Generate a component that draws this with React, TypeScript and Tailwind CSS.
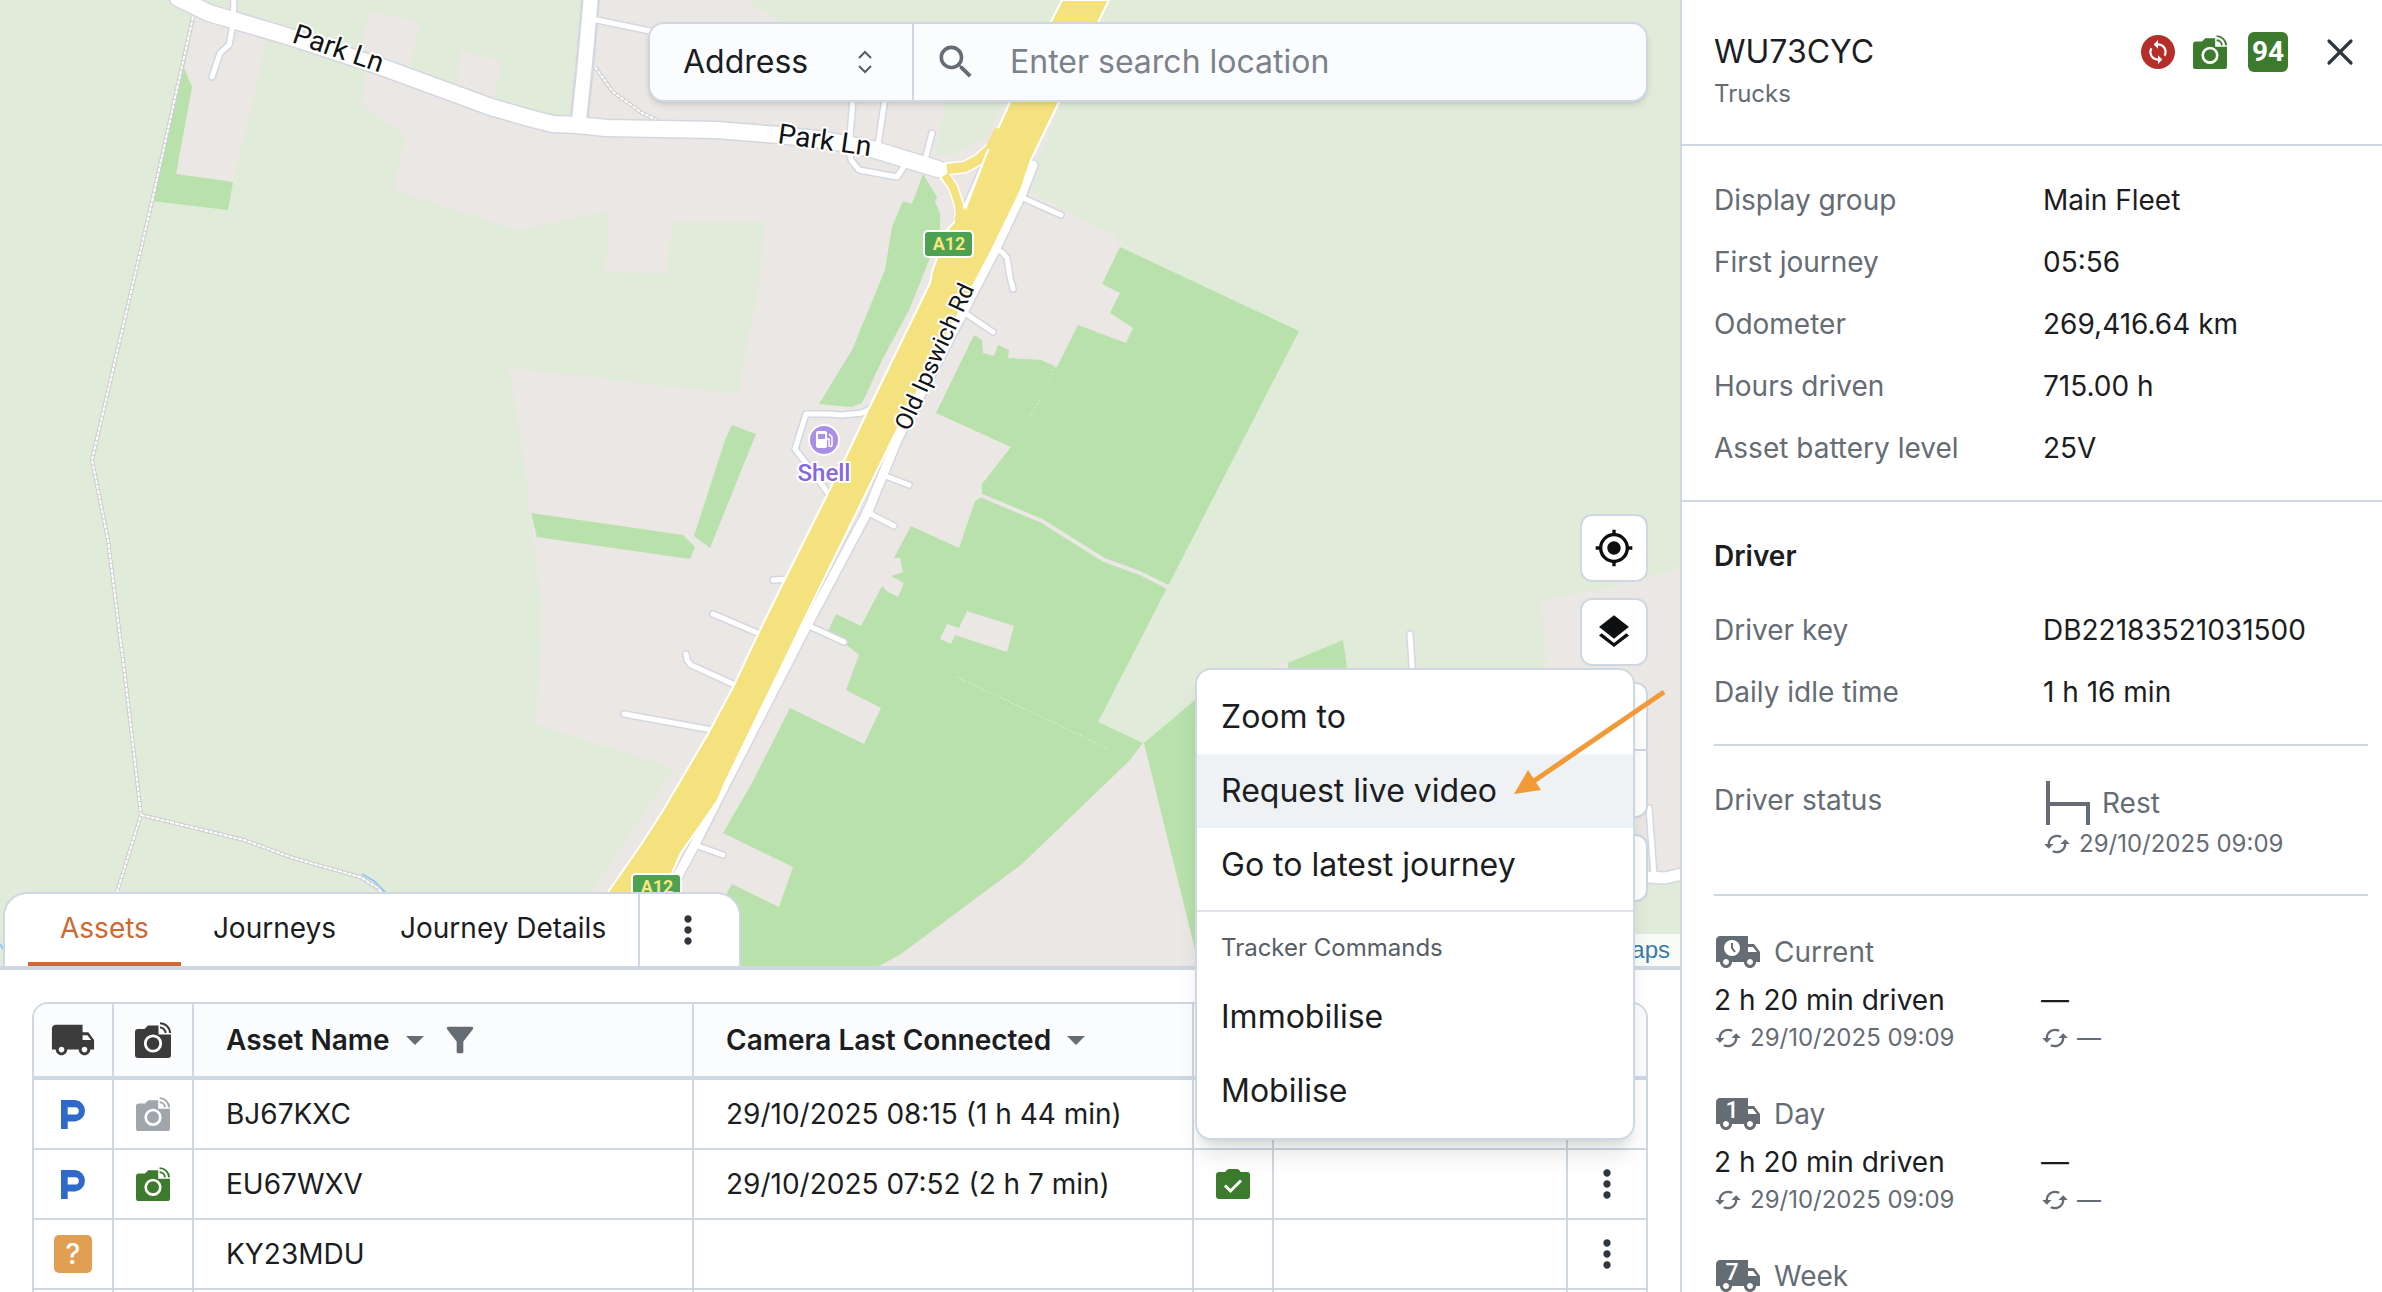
import type { ReactNode } from 'react';
import {
  MdCached,
  MdFilterAlt,
  MdLayers,
  MdLocalShipping,
  MdMoreVert,
  MdMyLocation,
  MdSearch,
  MdSync,
} from 'react-icons/md';
import { X } from 'lucide-react';

function CameraIcon({ className }: { className: string }) {
  return (
    <svg viewBox="0 0 36 36" className={className} aria-hidden="true">
      <path
        fill="currentColor"
        d="M3 7h6.500L13 3.400h10.500V12.500H36V33a3 3 0 0 1-3 3H3a3 3 0 0 1-3-3V10a3 3 0 0 1 3-3z"
      />
      <circle cx="18" cy="21.500" r="7.700" fill="none" stroke="#fff" strokeWidth="2.800" />
      <g fill="none" stroke="currentColor" strokeWidth="2">
        <path d="M25 1.200A10 10 0 0 1 35 11" />
        <path d="M25 5.600A5.600 5.600 0 0 1 30.600 11" />
      </g>
    </svg>
  );
}

function ParkedIcon() {
  return (
    <svg viewBox="0 0 25 29" className="mx-auto h-[29px] w-[25px]" role="img" aria-label="Parked">
      <path
        fill="#2f69c9"
        fillRule="evenodd"
        d="M0 0h14.200a10.800 10.800 0 0 1 0 21.500H6.700V29H0zM6.700 7.200v7.400h7.400a3.700 3.700 0 0 0 0-7.400z"
      />
    </svg>
  );
}

function CheckedIcon() {
  return (
    <svg viewBox="0 0 34 30" className="mx-auto h-[30px] w-[34px]" role="img" aria-label="Checks passed">
      <path
        fill="#3c7a2e"
        d="M3 3h6.500c.6-1.800 2-3 4-3h7c2 0 3.400 1.200 4 3H31a3 3 0 0 1 3 3v21a3 3 0 0 1-3 3H3a3 3 0 0 1-3-3V6a3 3 0 0 1 3-3z"
      />
      <path d="m9 16.500 5.500 5.500L25 11.500" fill="none" stroke="#fff" strokeWidth="3" />
    </svg>
  );
}

function SortIcon() {
  return (
    <svg viewBox="0 0 18 9" className="h-[9px] w-[18px]" aria-hidden="true">
      <path fill="#656c74" d="M0 0h18l-9 9z" />
    </svg>
  );
}

const residential =
  'M370 11 421 22 410 67 455 95 461 50 502 61 494 100 553 124 579 120 597 0 745 0 783 22 950 60 945 102 935 157 958 153 985 137 1005 103 1040 30 1080 30 1062 102 1038 160 1028 190 1114 235 1120 247 1299 331 1168 585 1098 722 1144 743 1195 944 1200 966 570 966 591 892 673 768 534 724 539 687 542 620 542 607 521 440 509 368 738 394 759 283 765 221 672 221 667 274 605 272 610 211 518 230 394 190 405 135 362 106 366 67 362 43Z';

const woods = [
  'M195 19 184 68 192 87 176 174 233 182 228 210 152 201Z',
  'M923 174 937 197 935 202 940 213 940 230 930 258 909 310 882 360 862 403 851 407 819 404 852 350 885 270 892 227 903 201 912 204Z',
  'M732 425 756 434 710 548 694 536 725 440Z',
  'M531 513 683 535 695 547 690 559 537 537Z',
  'M1120 247 1102 284 1120 293 1110 313 1133 328 1126 343 1078 325 1057 367 1041 360 1008 358 1009 350 998 345 994 356 983 353 982 340 974 335 936 413 1011 447 982 484 982 497 975 501 959 548 911 526 894 558 900 558 903 572 891 576 904 583 898 597 888 592 882 586 861 626 836 614 828 631 848 646 859 655 846 690 881 708 864 744 790 708 752 783 723 833 793 867 779 907 732 884 727 893 715 966 879 966 901 954 1022 864 1129 761 1143 743 1098 722 1168 586 1299 331Z',
  'M1144 743 1195 700 1240 670 1240 966 1199 966Z',
  'M1288 663 1343 640 1348 675 1288 675Z',
];

const lanes = [
  'M591 -5 585 63 579 120',
  'M178 -2 209 13 287 36 379 66 491 107 529 118 553 124 577 125 606 128 716 130 779 135 825 140 872 149 938 169',
];

const tracks = [
  'M597 20 650 31 700 45',
  'M853 98 849 150 851 160 859 170 897 177 905 165',
  'M885 98 878 145',
  'M932 133 925 160',
  'M234 -3 233 25 229 45 220 53 212 77',
  'M986 160 966 206',
  'M1021 197 1061 215',
  'M994 249 1002 252 1007 258 1010 277 1013 289',
  'M965 313 993 332',
  'M883 475 909 485',
  'M865 511 894 526',
  'M807 625 844 642',
  'M695 845 723 855',
  'M795 579 773 580',
  'M760 634 713 614',
  'M735 685 691 665 687 660 686 654',
  'M712 730 624 714',
  'M872 408 862 413 842 415 829 414 806 414 795 449 809 467 825 489 832 500',
  'M1410 634 1413 680',
  'M1649 808 1654 876',
];

const paths = [
  'M193 17 153 197 92 460 108 540 127 693 141 815 117 892 105 966',
  'M141 815 244 840 293 858 360 877 378 888 390 905',
  'M595 67 613 92 642 113 659 121',
];

const serviceRoad = 'M1033 165 1022 193 994 252 897 440 868 511 805 629 727 781 694 846 670 890';

const trunkRoad =
  'M1062 0 1010 102 986 155 965 210 947 230 932 272 930 283 869 408 841 467 785 579 758 634 734 685 709 732 662 812 640 846 608 892 565 966 640 966 672 873 681 853 718 800 725 783 805 618 892 440 898 428 992 250 1021 190 1031 160 1059 102 1109 0Z';

function RoadBadge({ x, y }: { x: number; y: number }) {
  return (
    <g>
      <rect x={x} y={y} width="49" height="26" rx="4" fill="#4ca153" stroke="#fff" strokeWidth="2" />
      <text
        x={x + 25}
        y={y + 19}
        textAnchor="middle"
        className="fill-[#f6e77c] font-['Roboto'] text-[18px] font-bold"
      >
        A12
      </text>
    </g>
  );
}

function MapCanvas() {
  return (
    <svg
      viewBox="0 0 1680 966"
      preserveAspectRatio="xMidYMid slice"
      className="absolute inset-0 h-full w-full"
      role="img"
      aria-label="Map of the area around Old Ipswich Road"
    >
      <rect width="1680" height="966" fill="#e0ecd9" />
      <g fill="#ebe7e4">
        <path d={residential} />
        <path d="M193 15 233 27 266 40 255 93 233 182 176 174 192 87 184 68Z" />
        <path d="M1541 600 1613 587 1680 568V868L1648 880H1565Z" />
        <path d="M1270 668 1288 662V680H1270Z" />
      </g>
      <g fill="#b8e1ab">
        {woods.map((d) => (
          <path key={d} d={d} />
        ))}
      </g>
      <path fill="#ebe7e4" d="M967 611 1014 626 1007 652 955 635 951 644 940 639 947 624 959 628Z" />
      <g fill="none" stroke="#ebe7e4">
        <path strokeWidth="4" d="M980 495 1042 521 1104 560 1140 573 1168 587" />
        <path strokeWidth="1" strokeDasharray="2 2" d="M957 677 1048 720 1107 748" />
        <path strokeWidth="1" strokeDasharray="2 2" d="M1056 366 1047 383M1040 400 1029 418" />
      </g>
      <path d="M362 874 374 881 386 893" fill="none" stroke="#8fcbf5" strokeWidth="2" />
      <path d="M0 944 4 950" fill="none" stroke="#8fcbf5" strokeWidth="2" />

      <g fill="none" strokeLinejoin="round">
        {paths.map((d) => (
          <g key={d}>
            <path d={d} stroke="#cccdd0" strokeWidth="4" />
            <path d={d} stroke="#fff" strokeWidth="2" strokeDasharray="4 1" />
          </g>
        ))}
      </g>

      <g fill="none" strokeLinecap="round" strokeLinejoin="round">
        <g stroke="#d5d7e0">
          {tracks.map((d) => (
            <path key={d} d={d} strokeWidth="8" />
          ))}
          {lanes.map((d) => (
            <path key={d} d={d} strokeWidth="19" />
          ))}
          <path d={serviceRoad} strokeWidth="12" />
          <path d="M1648 877 1665 878 1690 872" strokeWidth="14" />
        </g>
        <g stroke="#fff">
          {tracks.map((d) => (
            <path key={d} d={d} strokeWidth="5" />
          ))}
          <path d={lanes[0]} strokeWidth="14" />
          <path d={lanes[1]} strokeWidth="16" />
          <path d={serviceRoad} strokeWidth="9" />
          <path d="M1648 877 1665 878 1690 872" strokeWidth="11" />
          <path d="M945 169 965 167 978 160 995 145" strokeWidth="13" />
          <path d="M944 175 953 187 959 205 960 220" strokeWidth="11" />
        </g>
        <g stroke="#f4e27f">
          <path d="M947 169 965 167 978 160 995 145" strokeWidth="10" strokeLinecap="butt" />
          <path d="M945 175 953 187 959 205 960 220" strokeWidth="8" strokeLinecap="butt" />
        </g>
      </g>
      <path d={trunkRoad} fill="#f4e27f" stroke="#fff" strokeWidth="2" />
      <path d="M985 148 995 128 1010 130 1000 152ZM955 216 966 208 968 225 955 228Z" fill="#f4e27f" />

      <RoadBadge x={924} y={231} />
      <RoadBadge x={632} y={874} />

      <circle cx="824" cy="440" r="15" fill="#a98fe6" stroke="#fff" strokeWidth="2" />
      <g transform="translate(816 431)">
        <rect width="11" height="17" rx="2" fill="#fff" />
        <rect x="2" y="3" width="7" height="5" fill="#a98fe6" />
        <path d="M11 8h2v6a1.500 1.500 0 0 0 3 0V6l-3-3" fill="none" stroke="#fff" strokeWidth="1.500" />
      </g>

      <g stroke="#fff" strokeWidth="4" strokeLinejoin="round" paintOrder="stroke">
        <text
          x="824"
          y="481"
          textAnchor="middle"
          className="fill-[#8468dc] font-['Roboto'] text-[24px] font-medium"
        >
          Shell
        </text>
        <g className="fill-[#111315] font-['Roboto']">
          <text transform="translate(291 42) rotate(19)" className="text-[28px]">
            Park Ln
          </text>
          <text transform="translate(777 143) rotate(8)" className="text-[28px]">
            Park Ln
          </text>
          <text transform="translate(909 432) rotate(-65.500)" className="text-[24px]">
            Old Ipswich Rd
          </text>
        </g>
      </g>
    </svg>
  );
}

function SearchBar() {
  return (
    <div className="absolute top-[22px] right-8 flex h-20 w-[1000px] max-w-[90%] overflow-hidden rounded-2xl border-2 border-[#cfd8e2] bg-[#fbfcfe] text-[32px] shadow-md">
      <div className="relative w-[264px] shrink-0 border-r-2 border-[#cfd8e2]">
        <select
          aria-label="Search type"
          className="h-full w-full appearance-none bg-transparent pl-[33px] text-[#1b1d1f] outline-none"
        >
          <option>Address</option>
        </select>
        <svg
          viewBox="0 0 14 24"
          className="pointer-events-none absolute top-1/2 right-10 h-6 w-[14px] -translate-y-1/2"
          fill="none"
          stroke="#565d65"
          strokeWidth="2"
          aria-hidden="true"
        >
          <path d="m1 8 6-6 6 6M1 16l6 6 6-6" />
        </svg>
      </div>
      <label className="flex min-w-0 flex-1 items-center gap-8 pl-5">
        <MdSearch className="size-11 shrink-0 text-[#656c74]" aria-hidden="true" />
        <input
          type="text"
          aria-label="Search location"
          placeholder="Enter search location"
          className="min-w-0 flex-1 bg-transparent text-[#1b1d1f] outline-none placeholder:text-[#7b828b]"
        />
      </label>
    </div>
  );
}

function MapButton({ label, children }: { label: string; children?: ReactNode }) {
  return (
    <button
      type="button"
      aria-label={label}
      className="flex size-[68px] items-center justify-center rounded-xl border-2 border-[#cfd8e2] bg-white text-[#0d0f11]"
    >
      {children}
    </button>
  );
}

function MapControls() {
  return (
    <div className="absolute right-8 bottom-16 flex flex-col gap-4">
      <MapButton label="Centre on my location">
        <MdMyLocation className="size-10" />
      </MapButton>
      <MapButton label="Map layers">
        <MdLayers className="size-10" />
      </MapButton>
      <div className="flex h-[136px] w-[68px] flex-col divide-y-2 divide-[#cfd8e2] rounded-xl border-2 border-[#cfd8e2] bg-white">
        <button type="button" aria-label="Zoom in" className="flex-1" />
        <button type="button" aria-label="Zoom out" className="flex-1" />
      </div>
      <MapButton label="Map tools" />
    </div>
  );
}

function Tabs() {
  return (
    <div className="absolute bottom-0 left-[3px] flex h-[74px] rounded-t-3xl border-2 border-b-0 border-[#cfd8e2] bg-white text-[28px] text-[#1b1d1f]">
      <div role="tablist" className="flex pl-[23px]">
        <button
          type="button"
          role="tab"
          aria-selected="true"
          className="border-b-4 border-[#cf6832] px-8 text-[#cf6832]"
        >
          Assets
        </button>
        <button type="button" role="tab" aria-selected="false" className="border-b-4 border-transparent px-8">
          Journeys
        </button>
        <button type="button" role="tab" aria-selected="false" className="border-b-4 border-transparent px-8">
          Journey Details
        </button>
      </div>
      <button
        type="button"
        aria-label="More tabs"
        className="flex w-[101px] items-center justify-center border-l-2 border-[#cfd8e2] pr-1 text-[#2f363d]"
      >
        <MdMoreVert className="size-11" />
      </button>
    </div>
  );
}

const headCell = 'h-[76px] border-r-2 border-b-4 border-[#cfd8e2] last:border-r-0';
const bodyCell = 'h-[70px] border-r-2 border-b-2 border-[#cfd8e2] last:border-r-0';

type Row = {
  name: string;
  status: 'parked' | 'unknown';
  camera?: 'online' | 'offline';
  connected: string;
  checked?: boolean;
};

const rows: Row[] = [
  { name: 'BJ67KXC', status: 'parked', camera: 'offline', connected: '29/10/2025 08:15 (1 h 44 min)' },
  {
    name: 'EU67WXV',
    status: 'parked',
    camera: 'online',
    connected: '29/10/2025 07:52 (2 h 7 min)',
    checked: true,
  },
  { name: 'KY23MDU', status: 'unknown', connected: '' },
  { name: '', status: 'parked', connected: '' },
];

function AssetTable() {
  return (
    <div className="overflow-hidden rounded-t-2xl border-2 border-[#cfd8e2]">
      <table className="w-full table-fixed border-separate border-spacing-0 text-left text-[28px] text-[#1b1d1f]">
        <colgroup>
          <col className="w-20" />
          <col className="w-20" />
          <col className="w-[500px]" />
          <col className="w-[500px]" />
          <col className="w-20" />
          <col />
          <col className="w-[78px]" />
        </colgroup>
        <thead className="bg-[#fbfcfe]">
          <tr>
            <th className={headCell} aria-label="Status">
              <MdLocalShipping className="mx-auto size-[46px] text-[#3b3b3b]" />
            </th>
            <th className={headCell} aria-label="Camera">
              <CameraIcon className="mx-auto size-9 text-[#3b3b3b]" />
            </th>
            <th className={headCell}>
              <div className="flex items-center gap-4 pl-8 font-semibold">
                Asset Name
                <SortIcon />
                <button type="button" aria-label="Filter by asset name">
                  <MdFilterAlt className="size-10 text-[#656c74]" />
                </button>
              </div>
            </th>
            <th className={headCell}>
              <div className="flex items-center gap-4 pl-8 font-semibold">
                Camera Last Connected
                <SortIcon />
              </div>
            </th>
            <th className={headCell} aria-label="Checks" />
            <th className={headCell} aria-label="Notes" />
            <th className={headCell} aria-label="Actions" />
          </tr>
        </thead>
        <tbody>
          {rows.map((row) => (
            <tr key={row.name}>
              <td className={bodyCell}>
                {row.status === 'parked' ? (
                  <ParkedIcon />
                ) : (
                  <span className="mx-auto flex size-[38px] items-center justify-center rounded-[5px] bg-[#e09f52] font-medium text-white">
                    ?
                  </span>
                )}
              </td>
              <td className={bodyCell}>
                {row.camera === 'online' && <CameraIcon className="mx-auto size-[34px] text-[#3c7a2e]" />}
                {row.camera === 'offline' && <CameraIcon className="mx-auto size-[34px] text-[#a1a6ad]" />}
              </td>
              <td className={bodyCell}>
                <div className="pl-8">{row.name}</div>
              </td>
              <td className={bodyCell}>
                <div className="pl-8">{row.connected}</div>
              </td>
              <td className={bodyCell}>{row.checked && <CheckedIcon />}</td>
              <td className={bodyCell} />
              <td className={bodyCell}>
                {row.name && (
                  <button
                    type="button"
                    aria-label={`Actions for ${row.name}`}
                    className="mx-auto block text-[#2f363d]"
                  >
                    <MdMoreVert className="size-11" />
                  </button>
                )}
              </td>
            </tr>
          ))}
        </tbody>
      </table>
    </div>
  );
}

function MenuItem({ children, active = false }: { children: ReactNode; active?: boolean }) {
  return (
    <button
      type="button"
      role="menuitem"
      className={
        active
          ? 'block h-[74px] w-full bg-[#eef2f5] px-6 text-left'
          : 'block h-[74px] w-full px-6 text-left'
      }
    >
      {children}
    </button>
  );
}

function ContextMenu() {
  return (
    <div
      role="menu"
      className="absolute right-[45px] bottom-[152px] w-[440px] overflow-hidden rounded-2xl border-2 border-[#cfd8e2] bg-white py-[10px] text-[32px] text-[#1b1d1f] shadow-xl"
    >
      <MenuItem>Zoom to</MenuItem>
      <MenuItem active>Request live video</MenuItem>
      <MenuItem>Go to latest journey</MenuItem>
      <div className="mt-2 flex h-[70px] items-center border-t-2 border-[#dde3e9] px-6 pt-1 text-[24px] text-[#565d65]">
        Tracker Commands
      </div>
      <MenuItem>Immobilise</MenuItem>
      <MenuItem>Mobilise</MenuItem>
    </div>
  );
}

function Pointer() {
  return (
    <svg
      viewBox="0 0 154 110"
      className="pointer-events-none absolute right-[13px] bottom-[495px] h-[110px] w-[154px]"
      aria-hidden="true"
    >
      <path d="M151 5 18 96" stroke="#f09a38" strokeWidth="5" />
      <path d="M1 107 15 83 28 103Z" fill="#f09a38" />
    </svg>
  );
}

function Detail({ label, value }: { label: string; value: string }) {
  return (
    <div className="flex h-[62px] items-center">
      <dt className="w-[329px] shrink-0 text-[#656c74]">{label}</dt>
      <dd>{value}</dd>
    </div>
  );
}

function Updated({ at }: { at: string }) {
  return (
    <div className="flex h-9 items-center gap-2 text-[24px] text-[#656c74]">
      <MdCached className="size-7" aria-hidden="true" />
      {at}
    </div>
  );
}

type Mark = 'clock' | '1' | '7';

function PeriodIcon({ mark }: { mark: Mark }) {
  return (
    <span className="relative block size-12">
      <MdLocalShipping className="size-12 text-[#656c74]" aria-hidden="true" />
      <svg viewBox="0 0 48 48" className="absolute inset-0" aria-hidden="true">
        {mark === 'clock' ? (
          <>
            <circle cx="18" cy="20" r="8" fill="#fff" />
            <path d="M18 15v5l3 4" fill="none" stroke="#656c74" strokeWidth="2" />
          </>
        ) : (
          <text
            x="18"
            y="28"
            textAnchor="middle"
            className="fill-white font-['Roboto',sans-serif] text-[23px] font-medium"
          >
            {mark}
          </text>
        )}
      </svg>
    </span>
  );
}

type PeriodData = { label: string; mark: Mark; driven?: string; updated?: string };

const periods: PeriodData[] = [
  { label: 'Current', mark: 'clock', driven: '2 h 20 min driven', updated: '29/10/2025 09:09' },
  { label: 'Day', mark: '1', driven: '2 h 20 min driven', updated: '29/10/2025 09:09' },
  { label: 'Week', mark: '7' },
];

function Period({ label, mark, driven, updated }: PeriodData) {
  return (
    <section>
      <h3 className="mb-2 flex h-10 items-center gap-3 text-[#656c74]">
        <PeriodIcon mark={mark} />
        {label}
      </h3>
      {driven && updated && (
        <div className="flex">
          <div className="w-[327px] shrink-0">
            <p className="leading-10">{driven}</p>
            <Updated at={updated} />
          </div>
          <div>
            <p className="leading-10">—</p>
            <Updated at="—" />
          </div>
        </div>
      )}
    </section>
  );
}

function AssetPanel() {
  return (
    <aside className="flex w-[702px] shrink-0 flex-col overflow-hidden border-l-2 border-[#cfd8e2] bg-white text-[28px] text-[#1b1d1f]">
      <header className="flex h-[146px] shrink-0 justify-between border-b-2 border-[#cfd8e2] pt-8 pr-5 pl-8">
        <div>
          <h1 className="text-[32px] leading-10">WU73CYC</h1>
          <p className="mt-1 text-[24px] leading-9 text-[#656c74]">Trucks</p>
        </div>
        <div className="flex h-10 items-center">
          <span className="flex size-[34px] items-center justify-center rounded-full bg-[#b52f2a]">
            <MdSync className="size-[26px] text-white" aria-hidden="true" />
          </span>
          <CameraIcon className="ml-[18px] size-[34px] text-[#3c7a2e]" />
          <span className="ml-[21px] flex size-10 items-center justify-center rounded-md bg-[#3c7a2e] font-['Roboto',sans-serif] font-bold text-white">
            94
          </span>
          <button type="button" aria-label="Close" className="ml-[30px]">
            <X className="size-11 text-[#2f363d]" strokeWidth={1.75} />
          </button>
        </div>
      </header>

      <dl className="shrink-0 border-b-2 border-[#cfd8e2] pt-[23px] pb-[21px] pl-8">
        <Detail label="Display group" value="Main Fleet" />
        <Detail label="First journey" value="05:56" />
        <Detail label="Odometer" value="269,416.64 km" />
        <Detail label="Hours driven" value="715.00 h" />
        <Detail label="Asset battery level" value="25V" />
      </dl>

      <div className="pr-[14px] pl-8">
        <h2 className="pt-[34px] pb-[23px] leading-10 font-semibold">Driver</h2>
        <dl className="border-b-2 border-[#cfd8e2] pb-[21px]">
          <Detail label="Driver key" value="DB22183521031500" />
          <Detail label="Daily idle time" value="1 h 16 min" />
        </dl>

        <div className="flex border-b-2 border-[#cfd8e2] pt-[34px] pb-8 text-[#656c74]">
          <p className="w-[329px] shrink-0 leading-10">Driver status</p>
          <div>
            <div className="flex h-[46px] items-center gap-3 pl-[3px]">
              <svg viewBox="0 0 44 44" className="size-11" fill="none" stroke="#656c74" strokeWidth="4" aria-hidden="true">
                <path d="M2 0v44M2 23h40v21" />
              </svg>
              Rest
            </div>
            <Updated at="29/10/2025 09:09" />
          </div>
        </div>

        <div className="flex flex-col gap-[38px] pt-9">
          {periods.map((period) => (
            <Period key={period.label} {...period} />
          ))}
        </div>
      </div>
    </aside>
  );
}

export default function App() {
  return (
    <div className="flex h-screen overflow-hidden bg-white font-['Inter',sans-serif]">
      <main className="relative flex min-w-0 flex-1 flex-col">
        <div className="relative min-h-0 flex-1 overflow-hidden">
          <MapCanvas />
          <SearchBar />
          <MapControls />
          <a
            href="#maps"
            className="absolute right-0 bottom-0 h-8 bg-white/80 px-[10px] font-['Liberation_Sans',sans-serif] text-[24px] leading-8 text-[#3a7ca8]"
          >
            Maps
          </a>
          <Tabs />
        </div>
        <div className="h-[326px] shrink-0 overflow-hidden border-t-4 border-[#cfd8e2] bg-white px-8 pt-8">
          <AssetTable />
        </div>
        <ContextMenu />
        <Pointer />
      </main>
      <AssetPanel />
    </div>
  );
}
